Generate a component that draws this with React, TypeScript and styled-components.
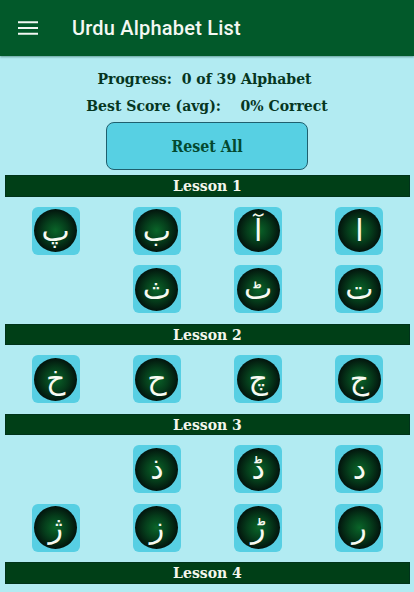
import React from "react";
import styled, { createGlobalStyle } from "styled-components";

type Lesson = {
  title: string;
  letters: string[];
};

const lessons: Lesson[] = [
  { title: "Lesson 1", letters: ["ا", "آ", "ب", "پ", "ت", "ٹ", "ث"] },
  { title: "Lesson 2", letters: ["ج", "چ", "ح", "خ"] },
  { title: "Lesson 3", letters: ["د", "ڈ", "ذ", "", "ر", "ڑ", "ز", "ژ"] },
  { title: "Lesson 4", letters: [] },
];

const App: React.FC = () => {
  return (
    <Screen>
      <GlobalStyle />
      <AppBar>
        <MenuButton aria-label="menu">
          <svg width="20" height="14" viewBox="0 0 20 14">
            <path d="M0 1.2h20M0 7h20M0 12.8h20" stroke="#f2f7f2" strokeWidth="2" />
          </svg>
        </MenuButton>
        <AppTitle>Urdu Alphabet List</AppTitle>
      </AppBar>
      <Summary>
        <SummaryLine>Progress:&nbsp; 0 of 39 Alphabet&nbsp;</SummaryLine>
        <SummaryLine>Best Score (avg): &nbsp;&nbsp;&nbsp;0% Correct</SummaryLine>
        <ResetButton>Reset All</ResetButton>
      </Summary>
      <LessonList>
        {lessons.map((lesson) => (
          <section key={lesson.title}>
            <LessonBar>{lesson.title}</LessonBar>
            {lesson.letters.length > 0 && (
              <LetterGrid>
                {lesson.letters.map((letter, i) =>
                  letter ? (
                    <Tile key={i}>
                      <Coin>{letter}</Coin>
                    </Tile>
                  ) : (
                    <span key={i} />
                  )
                )}
              </LetterGrid>
            )}
          </section>
        ))}
      </LessonList>
    </Screen>
  );
};

const GlobalStyle = createGlobalStyle`
  html, body {
    margin: 0;
    padding: 0;
    background: #b2ebf2;
  }
`;

const Screen = styled.div`
  width: 414px;
  height: 592px;
  overflow: hidden;
  background: #b2ebf2;
`;

const AppBar = styled.header`
  display: flex;
  align-items: center;
  height: 56px;
  background: #02592a;
  box-shadow: 0 1px 2px rgba(0, 60, 40, 0.45);
`;

const MenuButton = styled.div`
  display: flex;
  width: 72px;
  padding-left: 18px;
  box-sizing: border-box;
`;

const AppTitle = styled.h1`
  margin: 0;
  font-family: Roboto, sans-serif;
  font-size: 20px;
  font-weight: 500;
  letter-spacing: 0.2px;
  color: #f4f8f2;
`;

const Summary = styled.div`
  display: flex;
  flex-direction: column;
  align-items: center;
  padding-top: 9px;
`;

const SummaryLine = styled.div`
  height: 27px;
  line-height: 27px;
  font-family: "DejaVu Serif Condensed", "DejaVu Serif", serif;
  font-stretch: condensed;
  font-size: 15.6px;
  font-weight: 700;
  color: #06361f;
  white-space: nowrap;
`;

const ResetButton = styled.button`
  width: 202px;
  height: 48px;
  margin-top: 3px;
  border: 1px solid #1f5f6e;
  border-radius: 8px;
  background: #57d0e3;
  font-family: "DejaVu Serif Condensed", "DejaVu Serif", serif;
  font-stretch: condensed;
  font-size: 15.8px;
  font-weight: 700;
  color: #04492f;
`;

const LessonList = styled.div`
  padding: 5px 4px 0 5px;
`;

const LessonBar = styled.div`
  box-sizing: border-box;
  height: 21.5px;
  line-height: 20px;
  text-align: center;
  background: #003f17;
  border: 1px solid #00331a;
  font-family: "DejaVu Serif Condensed", "DejaVu Serif", serif;
  font-stretch: condensed;
  font-size: 15.6px;
  font-weight: 700;
  color: #f4f6ec;
`;

const LetterGrid = styled.div`
  display: grid;
  grid-template-columns: repeat(4, 1fr);
  row-gap: 10.5px;
  justify-items: center;
  padding: 10.25px 0;
  direction: rtl;
`;

const Tile = styled.div`
  display: flex;
  align-items: center;
  justify-content: center;
  width: 48px;
  height: 48px;
  border-radius: 6px;
  background: #57cfe3;
`;

const Coin = styled.div`
  display: flex;
  align-items: center;
  justify-content: center;
  width: 43px;
  height: 43px;
  border-radius: 50%;
  background: radial-gradient(circle, #0a6529 0%, #053d1b 38%, #03170e 68%, #020b08 100%);
  font-family: "DejaVu Sans", "Noto Sans", sans-serif;
  font-size: 30px;
  line-height: 1;
  color: #f8faf2;
`;

export default App;
